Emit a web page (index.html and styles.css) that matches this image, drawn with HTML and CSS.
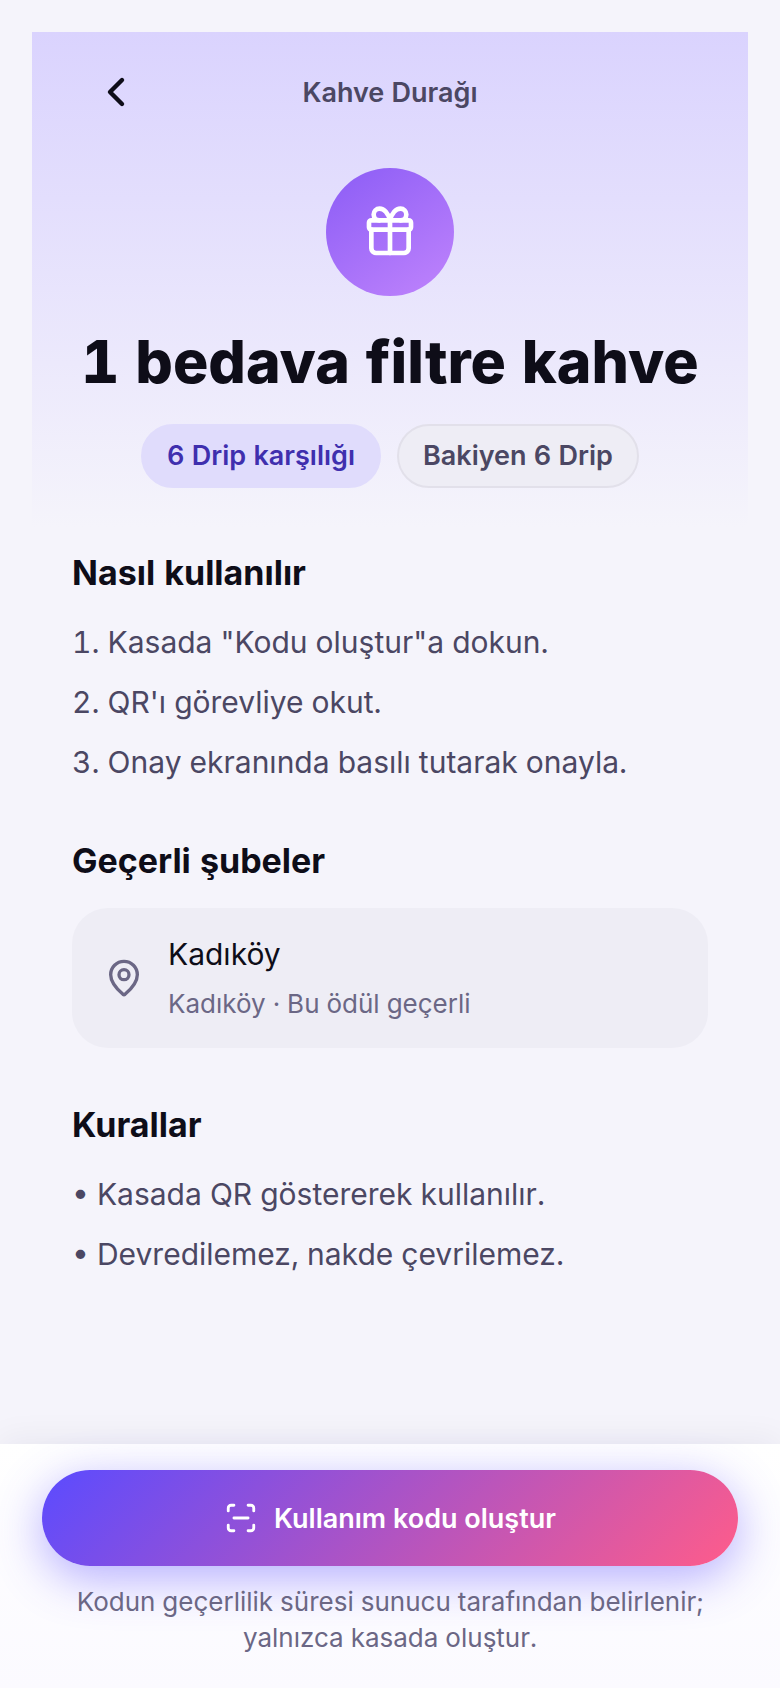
FILE: index.html
```html
<!DOCTYPE html>
<html lang="tr">
<head>
    <meta charset="UTF-8">
    <meta name="viewport" content="width=device-width, initial-scale=1.0">
    <title>Kahve Durağı</title>
    <link rel="stylesheet" href="styles.css">
</head>
<body>

<main class="content">
    <header class="hero">
        <div class="topbar">
            <button type="button" class="back" aria-label="Geri">
                <svg class="icon" viewBox="0 0 24 24" aria-hidden="true"><path d="m15 18-6-6 6-6"/></svg>
            </button>
            <span class="brand">Kahve Durağı</span>
        </div>
        <div class="badge">
            <svg class="icon" viewBox="0 0 24 24" aria-hidden="true">
                <rect x="3" y="7" width="18" height="4" rx="1"/>
                <path d="M12 7v14"/>
                <path d="M20 11v8a2 2 0 0 1-2 2H6a2 2 0 0 1-2-2v-8"/>
                <path d="M7.5 7a1 1 0 0 1 0-5A4.8 8 0 0 1 12 7a4.8 8 0 0 1 4.5-5 1 1 0 0 1 0 5"/>
            </svg>
        </div>
        <h1>1 bedava filtre kahve</h1>
        <div class="chips">
            <span class="chip chip-cost">6 Drip karşılığı</span>
            <span class="chip chip-balance">Bakiyen 6 Drip</span>
        </div>
    </header>

    <div class="sections">
        <section>
            <h2>Nasıl kullanılır</h2>
            <ol class="lines">
                <li>1. Kasada "Kodu oluştur"a dokun.</li>
                <li>2. QR'ı görevliye okut.</li>
                <li>3. Onay ekranında basılı tutarak onayla.</li>
            </ol>
        </section>

        <section>
            <h2>Geçerli şubeler</h2>
            <div class="branch">
                <svg class="icon" viewBox="0 0 24 24" aria-hidden="true">
                    <path d="M20 10c0 4.993-5.539 10.193-7.399 11.799a1 1 0 0 1-1.202 0C9.539 20.193 4 14.993 4 10a8 8 0 0 1 16 0"/>
                    <circle cx="12" cy="10" r="3"/>
                </svg>
                <div>
                    <p class="branch-name">Kadıköy</p>
                    <p class="branch-info">Kadıköy · Bu ödül geçerli</p>
                </div>
            </div>
        </section>

        <section>
            <h2>Kurallar</h2>
            <ul class="lines">
                <li>• Kasada QR göstererek kullanılır.</li>
                <li>• Devredilemez, nakde çevrilemez.</li>
            </ul>
        </section>
    </div>
</main>

<footer class="footer">
    <button type="button" class="create">
        <svg class="icon" viewBox="0 0 24 24" aria-hidden="true">
            <path d="M3 7V5a2 2 0 0 1 2-2h2"/>
            <path d="M17 3h2a2 2 0 0 1 2 2v2"/>
            <path d="M21 17v2a2 2 0 0 1-2 2h-2"/>
            <path d="M7 21H5a2 2 0 0 1-2-2v-2"/>
            <path d="M7 12h10"/>
        </svg>
        Kullanım kodu oluştur
    </button>
    <p class="note">Kodun geçerlilik süresi sunucu tarafından belirlenir; yalnızca kasada oluştur.</p>
</footer>

</body>
</html>
```

FILE: styles.css
```css
* {
    box-sizing: border-box;
}
body {
    font-family: Inter, "Liberation Sans", sans-serif;
    font-variant-numeric: tabular-nums;
    background-color: #f5f4fb;
    color: #0e0d18;
    display: flex;
    flex-direction: column;
    min-height: 100vh;
    margin: 0;
}
h1, h2, p, ol, ul {
    margin: 0;
    padding: 0;
}
.icon {
    display: block;
    flex: none;
    fill: none;
    stroke: currentColor;
    stroke-width: 2;
    stroke-linecap: round;
    stroke-linejoin: round;
}
.content {
    flex: 1;
    padding: 32px;
}
.hero {
    display: flex;
    flex-direction: column;
    align-items: center;
    padding: 16px 40px 40px;
    background: linear-gradient(#dad3fe, #f5f4fb);
}
.topbar {
    display: grid;
    grid-template-columns: 88px 1fr 88px;
    align-items: center;
    width: 100%;
    margin-bottom: 32px;
}
.back {
    display: flex;
    align-items: center;
    justify-content: center;
    height: 88px;
    padding: 0;
    border: none;
    background: none;
    color: #0e0d18;
    cursor: pointer;
}
.back .icon {
    width: 48px;
    height: 48px;
    stroke-width: 2.2;
}
.brand {
    font-size: 27px;
    font-weight: 600;
    text-align: center;
    color: #4b4763;
}
.badge {
    display: flex;
    align-items: center;
    justify-content: center;
    width: 128px;
    height: 128px;
    margin-bottom: 32px;
    border-radius: 50%;
    background: linear-gradient(145deg, #8b5cf6, #c084fc);
    color: #ffffff;
}
.badge .icon {
    width: 56px;
    height: 56px;
}
h1 {
    font-size: 59px;
    line-height: 68px;
    font-weight: 800;
    text-align: center;
}
.chips {
    display: flex;
    gap: 16px;
    margin-top: 28px;
}
.chip {
    padding: 14px 24px;
    border: 2px solid transparent;
    border-radius: 32px;
    font-size: 27px;
    line-height: 32px;
    font-weight: 600;
}
.chip-cost {
    background-color: #e0dcfc;
    border-color: #e0dcfc;
    color: #3f2fae;
}
.chip-balance {
    background-color: #eeedf5;
    border-color: #e2e0ea;
    color: #4b4763;
}
.sections {
    display: flex;
    flex-direction: column;
    gap: 56px;
    padding: 24px 40px;
}
h2 {
    margin-bottom: 26px;
    font-size: 34px;
    line-height: 42px;
    font-weight: 700;
}
.lines {
    display: flex;
    flex-direction: column;
    gap: 16px;
    list-style: none;
    font-size: 30px;
    line-height: 44px;
    color: #4b4763;
}
.branch {
    display: flex;
    align-items: center;
    gap: 24px;
    padding: 24px 32px;
    border-radius: 36px;
    background-color: #eeedf5;
}
.branch .icon {
    width: 40px;
    height: 40px;
    color: #6b6785;
}
.branch-name {
    font-size: 30px;
    line-height: 44px;
}
.branch-info {
    margin-top: 8px;
    font-size: 26px;
    line-height: 40px;
    color: #6b6785;
}
.footer {
    position: sticky;
    bottom: 0;
    padding: 26px 42px 32px;
    background: linear-gradient(#ffffff, #fbfaff);
    box-shadow: 0 -4px 32px rgba(20, 16, 50, 0.06);
}
.create {
    display: flex;
    align-items: center;
    justify-content: center;
    gap: 16px;
    width: 100%;
    height: 96px;
    border: none;
    border-radius: 48px;
    background: linear-gradient(135deg, #5b4bff, #ff5c8a);
    box-shadow: 0 12px 48px rgba(91, 75, 255, 0.45);
    color: #ffffff;
    font-family: inherit;
    font-size: 27px;
    font-weight: 600;
    cursor: pointer;
}
.create .icon {
    width: 34px;
    height: 34px;
}
.note {
    margin-top: 18px;
    font-size: 26px;
    line-height: 36px;
    text-align: center;
    color: #6b6785;
}
```
